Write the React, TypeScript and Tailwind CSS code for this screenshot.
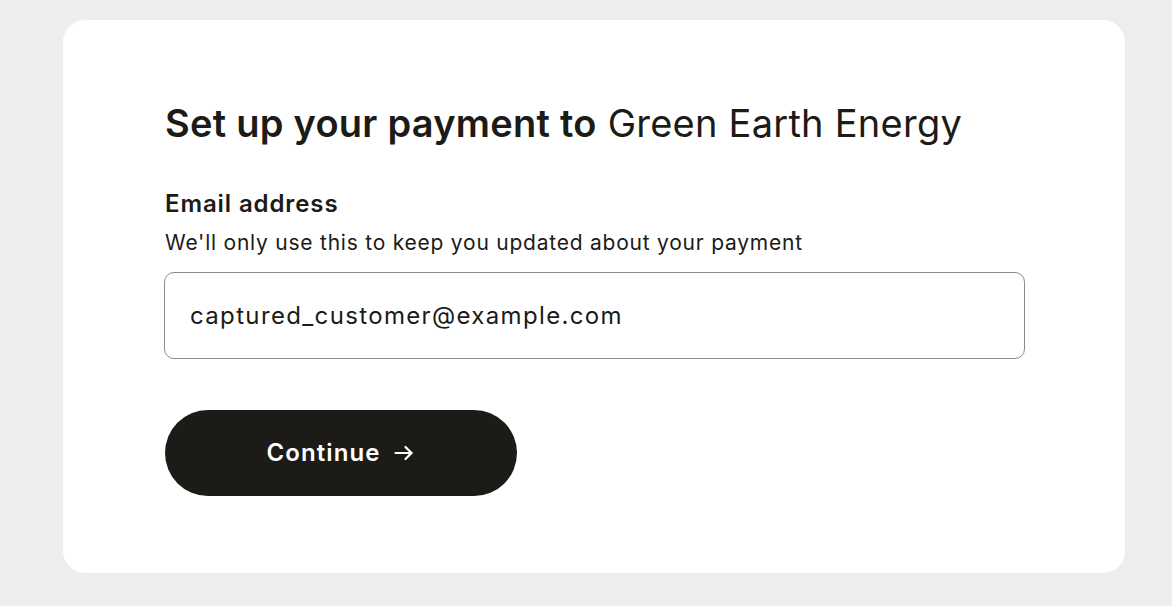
import React from "react";

export default function App() {
  return (
    <div
      className="w-[1172px] h-[606px] bg-[#eeedeb] pt-[20px] pl-[63px]"
      style={{ fontFamily: "Inter, 'Noto Sans', sans-serif" }}
    >
      <div className="w-[1062px] h-[553px] bg-white rounded-[22px] pl-[102px] pt-[81px] text-[#1c1b17]">
        <h1 className="text-[38px] leading-[44px] tracking-[0.25px]">
          <span className="font-semibold">Set up your payment to</span>{" "}
          <span className="font-normal">Green Earth Energy</span>
        </h1>
        <div className="mt-[44px] text-[24px] leading-[30px] font-semibold tracking-[0.9px]">Email address</div>
        <div className="mt-[10px] text-[21px] leading-[28px] tracking-[0.77px]">
          We'll only use this to keep you updated about your payment
        </div>
        <div className="mt-[15px] ml-[-1px] w-[861px] h-[87px] border-[1.5px] border-[#8f8b80] rounded-[10px] flex items-center px-[25px] text-[24px] tracking-[1.35px]">
          captured_customer@example.com
        </div>
        <button className="mt-[51px] w-[352px] h-[86px] rounded-full bg-[#1d1b17] text-white text-[24px] font-semibold tracking-[1.1px] flex items-center justify-center gap-[11px]">
          Continue
          <svg width="24" height="24" viewBox="0 0 24 24" fill="none" stroke="currentColor" strokeWidth="2.2" strokeLinecap="round" strokeLinejoin="round">
            <path d="M3.5 12h16" />
            <path d="M13.5 6l6 6-6 6" />
          </svg>
        </button>
      </div>
    </div>
  );
}
